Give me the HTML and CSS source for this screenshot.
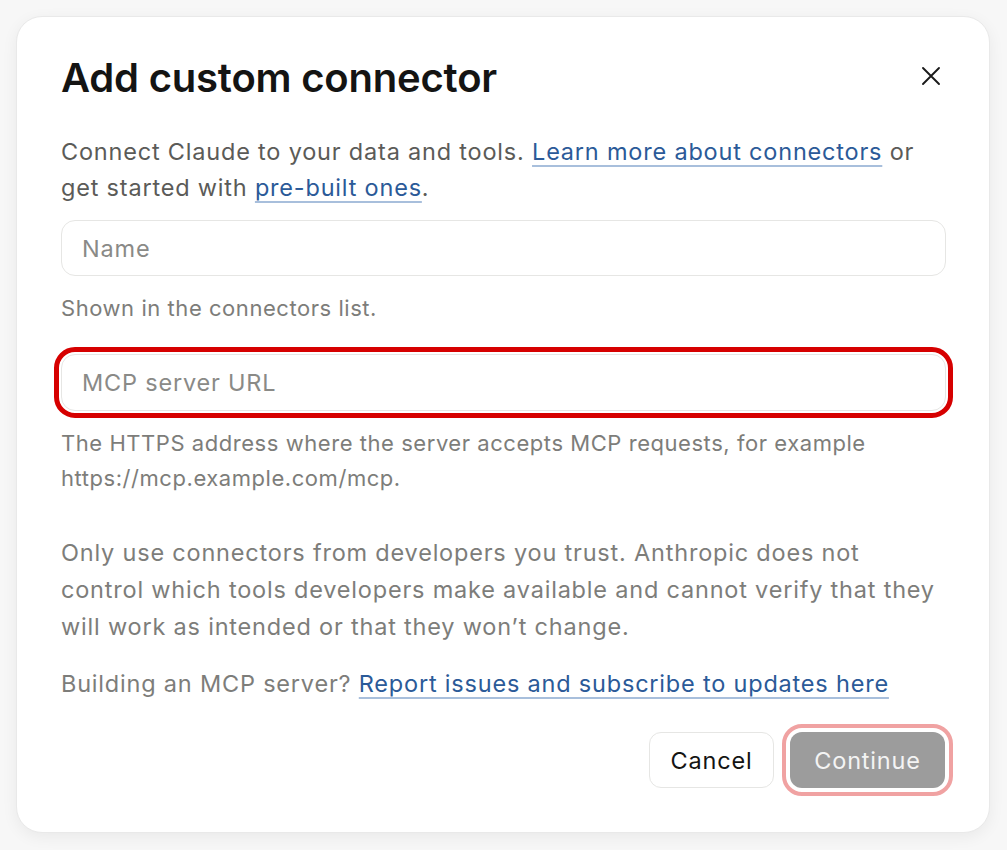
FILE: index.html
```html
<!DOCTYPE html>
<html lang="en">
<head>
<meta charset="utf-8">
<title>Add custom connector</title>
<link rel="stylesheet" href="styles.css">
</head>
<body>
<div class="page">
  <div class="dialog">
    <div class="header">
      <h1 class="title">Add custom connector</h1>
      <button class="close" aria-label="Close">
        <svg width="20" height="20" viewBox="0 0 20 20" fill="none" stroke="#1a1a1a" stroke-width="1.9" stroke-linecap="round"><path d="M2 2 L18 18 M18 2 L2 18"/></svg>
      </button>
    </div>
    <p class="intro">Connect Claude to your data and tools. <a class="link" href="#">Learn more about connectors</a> or get started with <a class="link" href="#">pre-built ones</a>.</p>
    <div class="field">
      <input class="input" type="text" placeholder="Name">
      <p class="hint">Shown in the connectors list.</p>
    </div>
    <div class="field field-url">
      <input class="input input-focus" type="text" placeholder="MCP server URL">
      <p class="hint hint-url">The HTTPS address where the server accepts MCP requests, for example https://mcp.example.com/mcp.</p>
    </div>
    <p class="warning">Only use connectors from developers you trust. Anthropic does not control which tools developers make available and cannot verify that they will work as intended or that they won’t change.</p>
    <p class="building">Building an MCP server? <a class="link" href="#">Report issues and subscribe to updates here</a></p>
    <div class="actions">
      <button class="btn btn-cancel">Cancel</button>
      <button class="btn btn-continue">Continue</button>
    </div>
  </div>
</div>
</body>
</html>
```

FILE: styles.css
```css
* { box-sizing: border-box; }
html, body { margin: 0; padding: 0; }
body {
  background: #f7f7f7;
  font-family: Inter, "Noto Sans", sans-serif;
  color: #141413;
}
.page {
  padding: 16px 17px 16px 16px;
}
.dialog {
  width: 974px;
  height: 817px;
  background: #ffffff;
  border-radius: 26px;
  border: 1px solid #e9e9e9;
  box-shadow: 0 4px 16px rgba(0,0,0,0.06);
  padding: 37px 44px 0 44px;
  display: flex;
  flex-direction: column;
}
.header {
  display: flex;
  align-items: center;
  justify-content: space-between;
}
.title {
  margin: 0;
  font-size: 40px;
  line-height: 48px;
  font-weight: 600;
  letter-spacing: -0.2px;
  color: #141413;
}
.close {
  border: 0;
  background: transparent;
  padding: 0;
  width: 20px;
  height: 20px;
  margin-right: 4px;
  margin-top: -4px;
  display: flex;
}
.intro {
  margin: 32px 0 0 0;
  font-size: 23.5px;
  line-height: 36px;
  letter-spacing: 0.8px;
  color: #5b5b58;
}
.link {
  color: #2b5a98;
  text-decoration: underline;
  text-decoration-color: #a8bfdc;
  text-decoration-thickness: 1.5px;
  text-underline-offset: 5px;
}
.field {
  margin-top: 14px;
}
.field-url {
  margin-top: 28px;
}
.input {
  display: block;
  width: 885px;
  height: 56px;
  border: 1.5px solid #e6e6e4;
  border-radius: 14px;
  background: #fff;
  padding: 0 20px;
  font-family: inherit;
  font-size: 23.5px;
  letter-spacing: 0.8px;
  color: #141413;
  outline: none;
}
.input::placeholder {
  color: #8a8a87;
}
.input-focus {
  height: 57px;
  outline: 5px solid #d60000;
  outline-offset: 2px;
}
.hint {
  margin: 15px 0 0 0;
  font-size: 22px;
  line-height: 35px;
  letter-spacing: 0.55px;
  color: #7d7d7a;
}
.hint-url {
  margin-top: 15px;
}
.warning {
  margin: 38px 0 0 0;
  font-size: 23.5px;
  line-height: 37px;
  letter-spacing: 0.8px;
  color: #7d7d7a;
}
.building {
  margin: 20px 0 0 0;
  font-size: 23.5px;
  line-height: 37px;
  letter-spacing: 0.8px;
  color: #7d7d7a;
}
.actions {
  margin-top: 30px;
  display: flex;
  justify-content: flex-end;
  gap: 16px;
}
.btn {
  height: 56px;
  border-radius: 12px;
  font-family: inherit;
  font-size: 23.5px;
  letter-spacing: 0.8px;
  padding: 0;
}
.btn-cancel {
  width: 125px;
  background: #fff;
  border: 1.5px solid #e6e6e4;
  color: #141413;
}
.btn-continue {
  width: 155px;
  background: #9c9c9c;
  border: 0;
  color: #f4f4f4;
  outline: 4px solid #f0a2a2;
  outline-offset: 4px;
}
```
